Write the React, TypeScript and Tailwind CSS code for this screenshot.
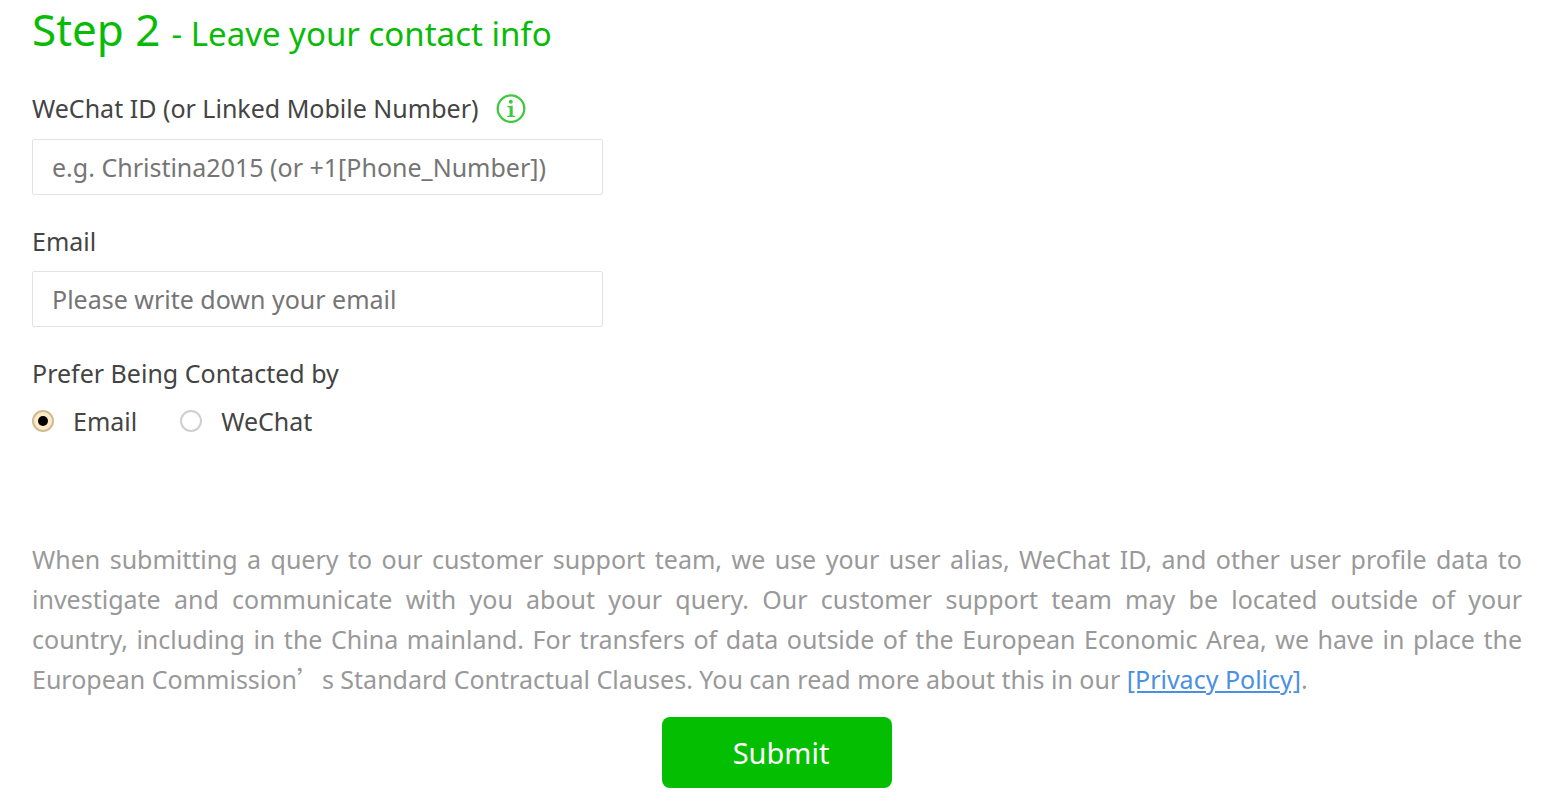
const inputClass =
    "mt-[10px] mb-[26px] block h-14 w-[571px] max-w-full rounded-xs border border-[#e3e3e3] px-[19px] text-[25px] text-[#444444] outline-none placeholder:text-[#757575]"

const radioClass =
    "relative mr-[19px] size-[22px] shrink-0 appearance-none rounded-full border-2 border-[#cfcfcf] bg-white checked:border-[#d0bc92] checked:bg-[#fdebc8] after:absolute after:inset-1 after:hidden after:rounded-full after:bg-black checked:after:block"

const InfoIcon = () => (
    <svg width="30" height="30" viewBox="0 0 30 30" fill="none" aria-hidden="true">
        <circle cx="15" cy="14.6" r="13.3" stroke="#3fc93f" strokeWidth="2.3" />
        <circle cx="14.8" cy="7.8" r="2" fill="#3fc93f" />
        <path d="M11.4 12h2.4l2.9-.5v9.9l2.4.5v1.2h-7.9v-1.2l2.4-.5v-7.8l-2.2-.4z" fill="#3fc93f" />
    </svg>
)

const App: React.FC = () => {
    return (
        <main className="bg-white pl-8 pr-[45px] font-['Noto_Sans',sans-serif] text-[25px] text-[#444444]">
            <form onSubmit={(e) => e.preventDefault()}>
                <h1 className="flex h-[61px] items-baseline gap-[11px] text-[#09bb07]">
                    <span className="text-[44px] leading-[58px]">Step 2</span>
                    <span className="text-[33px]">- Leave your contact info</span>
                </h1>

                <div className="mt-7 flex h-10 items-center gap-[18px]">
                    <label htmlFor="wechat">WeChat ID (or Linked Mobile Number)</label>
                    <button type="button" aria-label="About WeChat ID">
                        <InfoIcon />
                    </button>
                </div>
                <input id="wechat" type="text" className={inputClass} placeholder="e.g. Christina2015 (or +1[Phone_Number])" />

                <label htmlFor="email" className="block leading-10">Email</label>
                <input id="email" type="email" className={inputClass} placeholder="Please write down your email" />

                <fieldset>
                    <legend className="leading-10">Prefer Being Contacted by</legend>
                    <div className="flex gap-[43px] pt-2">
                        <label className="flex items-center leading-10">
                            <input type="radio" name="contact" defaultChecked className={radioClass} />
                            Email
                        </label>
                        <label className="flex items-center leading-10">
                            <input type="radio" name="contact" className={radioClass} />
                            WeChat
                        </label>
                    </div>
                </fieldset>

                <p className="mt-[98px] text-justify leading-10 text-[#999999]">
                    When submitting a query to our customer support team, we use your user alias, WeChat ID, and other user profile data to investigate and communicate with you about your query. Our customer support team may be located outside of your country,&nbsp;including in the China mainland. For transfers of data outside of the European Economic Area, we have in place the European&nbsp;Commission
                    <span className="font-['Noto_Sans_CJK_SC',sans-serif] leading-none" lang="zh-CN">’</span>
                    s Standard Contractual Clauses. You can read more about this in our{' '}
                    <a href="#privacy" className="text-[#4a90e2] underline">[Privacy Policy]</a>.
                </p>

                <button type="submit" className="mx-auto mt-[18px] block h-[71px] w-[230px] rounded-lg bg-[#04be02] pl-2 text-[29px] text-white">
                    Submit
                </button>
            </form>
        </main>
    )
}

export default App
